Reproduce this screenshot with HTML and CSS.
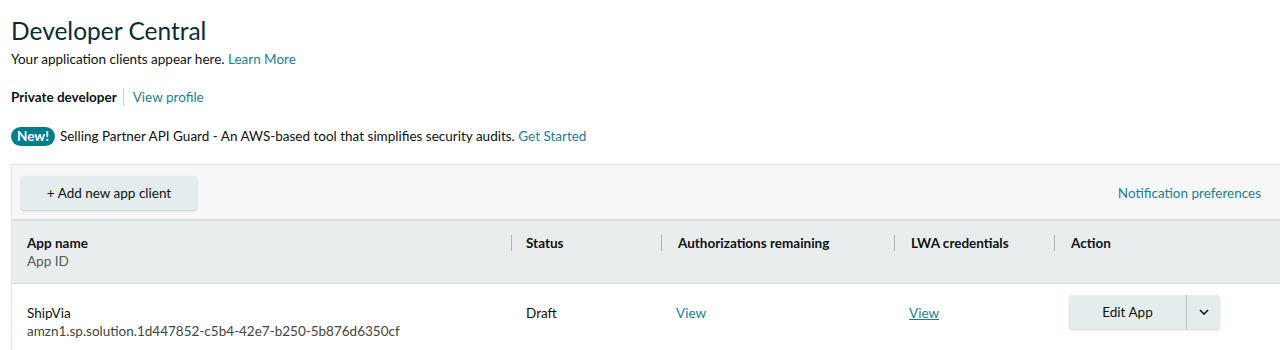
FILE: index.html
```html
<!DOCTYPE html>
<html lang="en">
<head>
  <meta charset="UTF-8" />
  <title>Developer Central</title>
  <link rel="stylesheet" href="styles.css">
</head>
<body>

  <h1>Developer Central</h1>
  <p class="intro">Your application clients appear here. <a href="#">Learn More</a></p>

  <div class="profile">
    <span class="dev-type">Private developer</span>
    <a href="#">View profile</a>
  </div>

  <div class="notice">
    <span class="badge">New!</span>
    <span>Selling Partner API Guard - An AWS-based tool that simplifies security audits. <a href="#">Get Started</a></span>
  </div>

  <div class="apps">
    <div class="toolbar">
      <button class="btn">+ Add new app client</button>
      <a href="#">Notification preferences</a>
    </div>

    <div class="grid head">
      <div class="cell">App name<span class="sub">App ID</span></div>
      <div class="cell sep">Status</div>
      <div class="cell sep wide">Authorizations remaining</div>
      <div class="cell sep wide">LWA credentials</div>
      <div class="cell sep wide">Action</div>
    </div>

    <div class="grid row">
      <div class="cell">ShipVia<span class="sub">amzn1.sp.solution.1d447852-c5b4-42e7-b250-5b876d6350cf</span></div>
      <div class="cell">Draft</div>
      <div class="cell wide"><a href="#">View</a></div>
      <div class="cell wide"><a href="#" class="hover">View</a></div>
      <div class="cell action">
        <div class="split">
          <button class="split-main">Edit App</button>
          <button class="split-arrow">
            <svg width="10" height="6" viewBox="0 0 10 6"><path d="M1 1l4 4 4-4" fill="none" stroke="#16191f" stroke-width="1.6"/></svg>
          </button>
        </div>
      </div>
    </div>
  </div>

</body>
</html>
```

FILE: styles.css
```css
body {
  margin: 0;
  padding: 0 0 0 11px;
  font-family: Lato, "Liberation Sans", sans-serif;
  font-size: 13.5px;
  color: #0f1111;
  background: #fff;
  overflow: hidden;
}

a {
  color: #1d7f90;
  text-decoration: none;
}

h1 {
  margin: 14px 0 0;
  font-size: 24.5px;
  font-weight: 400;
  line-height: 34px;
  color: #0d2b32;
}

.intro {
  margin: 2px 0 0;
  line-height: 18px;
}

.profile {
  margin-top: 20px;
  display: flex;
  align-items: center;
  line-height: 18px;
}

.dev-type {
  font-weight: bold;
  padding-right: 6px;
  border-right: 1px solid #c4cccc;
  margin-right: 9px;
}

.notice {
  margin-top: 20px;
  display: flex;
  align-items: center;
  gap: 5px;
  line-height: 20px;
}

.badge {
  background: #047d8b;
  color: #fff;
  font-weight: bold;
  border-radius: 10px;
  padding: 0 6px;
  line-height: 19px;
}

.apps {
  margin-top: 18px;
  border: 1px solid #e3e6e6;
  border-right: none;
}

.toolbar {
  display: flex;
  justify-content: space-between;
  align-items: center;
  background: #f7f7f7;
  padding: 11px 19px 9px 9px;
  border-bottom: 2px solid #dcdfdf;
}

.btn {
  width: 176px;
  height: 34px;
  background: #e3eded;
  border: none;
  border-radius: 3px;
  box-shadow: 0 1px 2px rgba(0, 0, 0, 0.18);
  font: inherit;
  color: #0f1111;
}

.grid {
  display: grid;
  grid-template-columns: 499px 150px 233px 160px 1fr;
}

.head {
  background: #e9eded;
  border-bottom: 1px solid #d5dbdb;
  font-weight: bold;
  height: 62px;
}

.head .cell {
  padding: 13px 15px 0;
  line-height: 18px;
  position: relative;
}

.grid .wide {
  padding-left: 17px;
}

.sep::before {
  content: "";
  position: absolute;
  left: 0;
  top: 14px;
  height: 16px;
  border-left: 1px solid #aab7b8;
}

.sub {
  display: block;
  font-weight: normal;
  color: #565959;
}

.row {
  height: 66px;
}

.row .cell {
  padding: 20px 15px 0;
  line-height: 18px;
}

.row .sub {
  color: #444;
}

.hover {
  text-decoration: underline;
}

.row .action {
  padding: 11px 15px 0;
}

.split {
  display: flex;
  width: 151px;
  height: 34px;
  background: #e3eded;
  border-radius: 3px;
  box-shadow: 0 1px 2px rgba(0, 0, 0, 0.18);
}

.split button {
  background: none;
  border: none;
  font: inherit;
  color: #0f1111;
}

.split-main {
  width: 118px;
  border-right: 1px solid #b9c4c4 !important;
}

.split-arrow {
  flex: 1;
  display: flex;
  align-items: center;
  justify-content: center;
}
```
